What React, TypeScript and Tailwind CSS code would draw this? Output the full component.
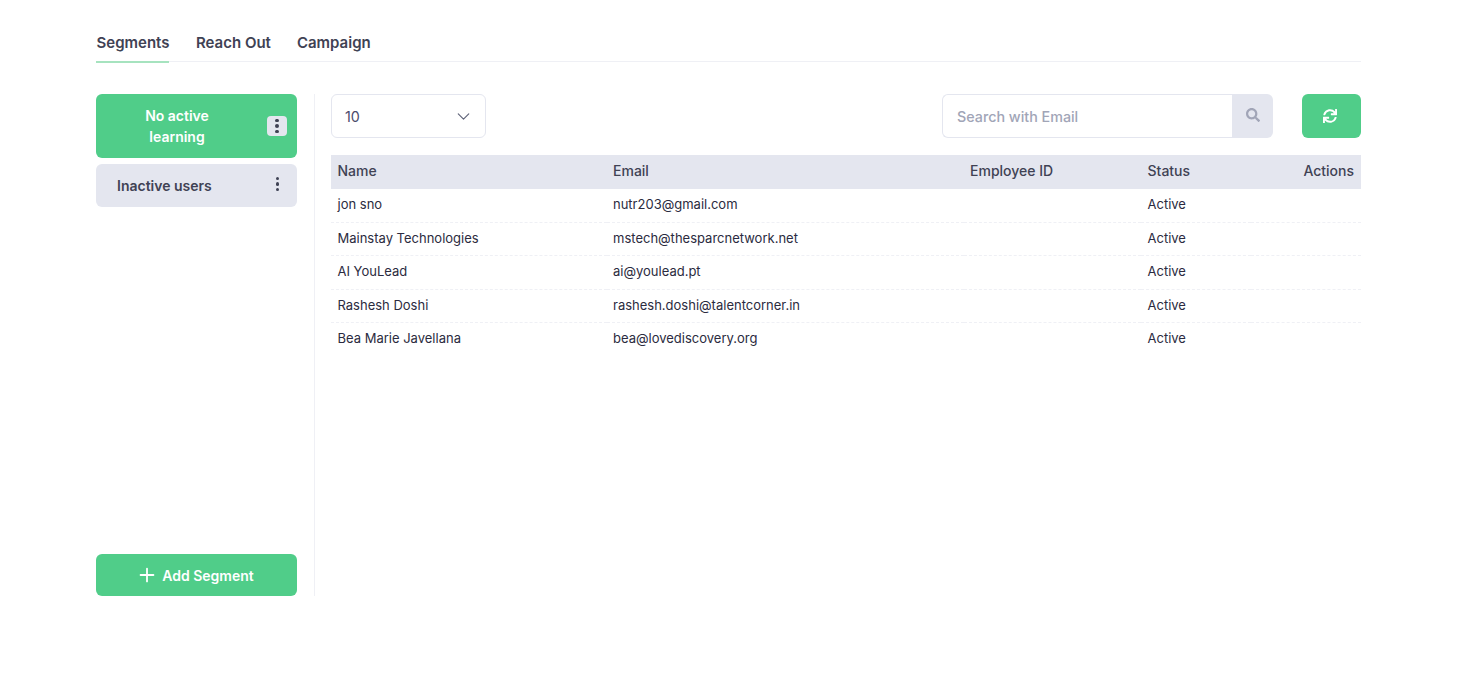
import React from "react";
import { ChevronDown, Plus } from "lucide-react";
import { FaSearch, FaSync } from "react-icons/fa";

const rows = [
  ["jon sno", "nutr203@gmail.com"],
  ["Mainstay Technologies", "mstech@thesparcnetwork.net"],
  ["AI YouLead", "ai@youlead.pt"],
  ["Rashesh Doshi", "rashesh.doshi@talentcorner.in"],
  ["Bea Marie Javellana", "bea@lovediscovery.org"],
];

function Dots() {
  return (
    <span className="flex flex-col items-center gap-[2px]">
      <span className="w-[3.5px] h-[3.5px] rounded-full bg-[#3f4254]" />
      <span className="w-[3.5px] h-[3.5px] rounded-full bg-[#3f4254]" />
      <span className="w-[3.5px] h-[3.5px] rounded-full bg-[#3f4254]" />
    </span>
  );
}

export default function App() {
  return (
    <div className="min-h-[674px] bg-white pt-[28px] pl-[96px] pr-[119px] font-['Inter',sans-serif] text-[#3f4254]">
      <div className="flex gap-[26px] border-b border-[#eff0f5] h-[34px] text-[15px] font-semibold leading-[30px]">
        <div className="border-b-2 border-[#a6e3bf] h-[35px] w-[73.3px] mr-[0.7px] pl-[0.5px] whitespace-nowrap text-[#3f4254]">Segments</div>
        <div>Reach Out</div>
        <div>Campaign</div>
      </div>

      <div className="flex mt-[32px] h-[502px]">
        <aside className="w-[201px] flex flex-col">
          <div className="h-[64px] rounded-md bg-[#50cd89] text-white text-[14px] font-semibold leading-[21px] flex items-center pl-[22px] pr-[10px]">
            <span className="w-[118px] text-center">No active learning</span>
            <span className="ml-auto w-[20px] h-[20px] rounded bg-[#e4e6ef] flex items-center justify-center"><Dots /></span>
          </div>
          <div className="mt-[6px] h-[43px] rounded-md bg-[#e4e6ef] text-[14px] font-semibold flex items-center pl-[21px] pr-[18px]">
            <span>Inactive users</span>
            <span className="ml-auto -mt-[3px]"><Dots /></span>
          </div>
          <button className="mt-auto h-[42px] rounded-md bg-[#50cd89] text-white text-[14px] font-semibold flex items-center justify-center gap-[4px] pr-[3px]">
            <Plus size={22} strokeWidth={2} />
            Add Segment
          </button>
        </aside>

        <div className="ml-[17px] border-l border-[#eff0f5] pl-[16px] flex-1 min-w-0">
          <div className="flex items-center h-[44px]">
            <div className="w-[155px] h-[44px] rounded-md border border-[#e4e6ef] flex items-center justify-between pl-[13px] pr-[11px] text-[14.3px] text-[#4b4b6b]">
              <span className="pt-[1px]">10</span>
              <ChevronDown size={21} strokeWidth={1.3} className="text-[#5e6278]" />
            </div>
            <div className="ml-auto w-[331px] h-[44px] flex">
              <div className="flex-1 rounded-l-md border border-r-0 border-[#e4e6ef] flex items-center pl-[14px] pt-[1px] text-[14.3px] font-medium text-[#a1a5b7]">
                Search with Email
              </div>
              <div className="w-[41px] rounded-r-md bg-[#e4e6ef] flex items-center justify-center pb-[3px] text-[#a1a5b7]">
                <FaSearch size={14} />
              </div>
            </div>
            <button className="ml-[29px] w-[59px] h-[44px] rounded-md bg-[#50cd89] text-white flex items-center justify-center pr-[4px]">
              <FaSync size={14} />
            </button>
          </div>

          <table className="mt-[17px] w-full table-fixed border-collapse">
            <colgroup>
              <col className="w-[275.5px]" />
              <col className="w-[357px]" />
              <col className="w-[177.5px]" />
              <col />
              <col />
            </colgroup>
            <thead>
              <tr className="bg-[#e4e6ef] h-[34px] text-[14px] font-medium">
                <th className="px-[6.5px] pb-[3px] text-left font-medium">Name</th>
                <th className="px-[6.5px] pb-[3px] text-left font-medium">Email</th>
                <th className="px-[6.5px] pb-[3px] text-left font-medium">Employee ID</th>
                <th className="px-[6.5px] pb-[3px] text-left font-medium">Status</th>
                <th className="pl-[6.5px] pr-[7px] pb-[3px] text-right font-medium">Actions</th>
              </tr>
            </thead>
            <tbody>
              {rows.map(([name, email], i) => (
                <tr key={email} className={`h-[33.4px] text-[13px] text-[#2b2b40] ${i < rows.length - 1 ? "border-b border-dashed border-[#eff0f5]" : ""}`}>
                  <td className="px-[6.5px] pb-[1px]">{name}</td>
                  <td className="px-[6.5px] pb-[1px]">{email}</td>
                  <td className="px-[6.5px] pb-[1px]"></td>
                  <td className="px-[6.5px] pb-[1px]">Active</td>
                  <td className="px-[6.5px] pb-[1px]"></td>
                </tr>
              ))}
            </tbody>
          </table>
        </div>
      </div>
    </div>
  );
}
